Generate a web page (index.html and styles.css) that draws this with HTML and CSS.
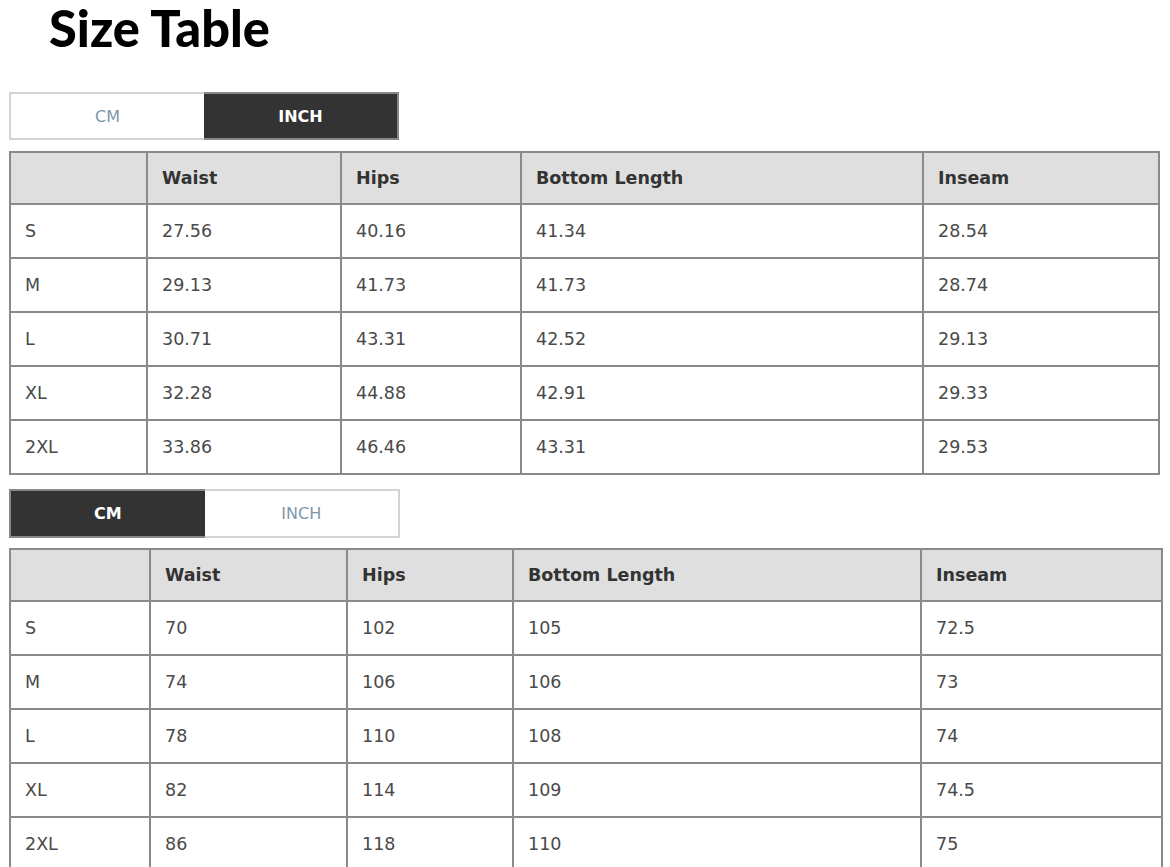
FILE: index.html
```html
<!DOCTYPE html>
<html>
<head>
<meta charset="utf-8">
<link rel="stylesheet" href="styles.css">
</head>
<body>
<div class="page">
  <h1 class="title">Size Table</h1>

  <div class="tabs tabs-top">
    <div class="tab">CM</div>
    <div class="tab active">INCH</div>
  </div>
  <table class="size t1">
    <colgroup><col class="c1"><col class="c2"><col class="c3"><col class="c4"><col class="c5"></colgroup>
    <thead><tr><th></th><th>Waist</th><th>Hips</th><th>Bottom Length</th><th>Inseam</th></tr></thead>
    <tbody>
      <tr><td>S</td><td>27.56</td><td>40.16</td><td>41.34</td><td>28.54</td></tr>
      <tr><td>M</td><td>29.13</td><td>41.73</td><td>41.73</td><td>28.74</td></tr>
      <tr><td>L</td><td>30.71</td><td>43.31</td><td>42.52</td><td>29.13</td></tr>
      <tr><td>XL</td><td>32.28</td><td>44.88</td><td>42.91</td><td>29.33</td></tr>
      <tr><td>2XL</td><td>33.86</td><td>46.46</td><td>43.31</td><td>29.53</td></tr>
    </tbody>
  </table>

  <div class="tabs tabs-bottom">
    <div class="tab active">CM</div>
    <div class="tab">INCH</div>
  </div>
  <table class="size t2">
    <colgroup><col class="c1"><col class="c2"><col class="c3"><col class="c4"><col class="c5"></colgroup>
    <thead><tr><th></th><th>Waist</th><th>Hips</th><th>Bottom Length</th><th>Inseam</th></tr></thead>
    <tbody>
      <tr><td>S</td><td>70</td><td>102</td><td>105</td><td>72.5</td></tr>
      <tr><td>M</td><td>74</td><td>106</td><td>106</td><td>73</td></tr>
      <tr><td>L</td><td>78</td><td>110</td><td>108</td><td>74</td></tr>
      <tr><td>XL</td><td>82</td><td>114</td><td>109</td><td>74.5</td></tr>
      <tr><td>2XL</td><td>86</td><td>118</td><td>110</td><td>75</td></tr>
    </tbody>
  </table>
</div>
</body>
</html>
```

FILE: styles.css
```css
html, body {
  margin: 0;
  padding: 0;
  background: #fff;
}

.page {
  display: flex;
  flex-direction: column;
  align-items: flex-start;
  padding: 0 0 0 9px;
}

.title {
  font-family: "Lato", sans-serif;
  font-weight: 900;
  font-size: 50.5px;
  line-height: 56px;
  margin: 0 0 36px 40px;
  color: #000;
  letter-spacing: 0;
}

.tabs {
  display: flex;
  width: 390px;
  height: 48px;
}

.tab {
  flex: 1;
  display: flex;
  align-items: center;
  justify-content: center;
  font-family: "DejaVu Sans", sans-serif;
  font-size: 16px;
  color: #7e97a8;
  background: #fff;
  border: 2px solid #d4d4d4;
}

.tab.active {
  background: #333;
  color: #fff;
  font-weight: bold;
  border-color: #888;
}

.tabs-top { margin-bottom: 11px; }
.tabs-top .tab:first-child { border-right: none; }
.tabs-top .tab.active { border-left: none; }

.tabs-bottom { margin-top: 14px; margin-bottom: 10px; width: 391px; height: 49px; }
.tabs-bottom .tab.active { border-right: none; }
.tabs-bottom .tab:last-child { border-left: none; }

.size {
  border-collapse: collapse;
  table-layout: fixed;
  font-family: "DejaVu Sans", sans-serif;
  font-size: 17.5px;
  color: #4a4a4a;
}

.size th, .size td {
  border: 2px solid #8a8a8a;
  text-align: left;
  padding: 0 0 0 14px;
  height: 52px;
  font-weight: normal;
}

.size th {
  background: #dfdfdf;
  color: #333;
  font-weight: bold;
  height: 50px;
}

.t1 { width: 1149px; }
.t1 .c1 { width: 137px; }
.t1 .c2 { width: 194px; }
.t1 .c3 { width: 180px; }
.t1 .c4 { width: 402px; }
.t1 .c5 { width: 236px; }

.t2 { width: 1152px; }
.t2 .c1 { width: 140px; }
.t2 .c2 { width: 197px; }
.t2 .c3 { width: 166px; }
.t2 .c4 { width: 408px; }
.t2 .c5 { width: 241px; }
```
